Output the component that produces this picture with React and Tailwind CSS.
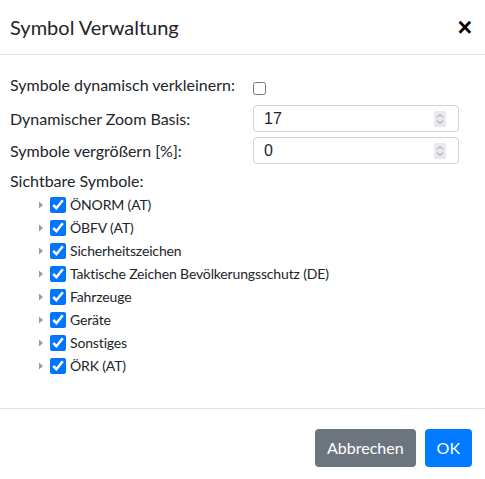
import { useState } from "react";

const groups = [
  "ÖNORM (AT)",
  "ÖBFV (AT)",
  "Sicherheitszeichen",
  "Taktische Zeichen Bevölkerungsschutz (DE)",
  "Fahrzeuge",
  "Geräte",
  "Sonstiges",
  "ÖRK (AT)",
];

function Spinner() {
  return (
    <span className="absolute right-[13px] top-1/2 -translate-y-1/2 w-[12px] h-[16px] bg-[#e9e9ed] flex flex-col items-center justify-center gap-[2px]">
      <svg width="8" height="5" viewBox="0 0 8 5" fill="none" stroke="#8a8a8f" strokeWidth="1">
        <path d="M1 4.5 L4 1.5 L7 4.5" />
      </svg>
      <svg width="8" height="5" viewBox="0 0 8 5" fill="none" stroke="#8a8a8f" strokeWidth="1">
        <path d="M1 0.5 L4 3.5 L7 0.5" />
      </svg>
    </span>
  );
}

function NumberField({ value }) {
  return (
    <div className="relative w-[206px] h-[27px]">
      <input
        type="text"
        readOnly
        value={value}
        className="w-full h-full border border-[#ced4da] rounded-[4px] pl-[10px] text-[16px] text-[#212529] outline-none font-['Liberation_Sans',sans-serif]"
      />
      <Spinner />
    </div>
  );
}

export default function App() {
  const [checked, setChecked] = useState(groups.map(() => true));

  return (
    <div className="w-[485px] h-[479px] bg-white text-[#212529] font-['Lato',sans-serif] flex flex-col">
      <div className="h-[55px] flex items-center justify-between pl-[10px] pr-[13px] border-b border-[#dee2e6]">
        <h5 className="text-[20px] leading-none">Symbol Verwaltung</h5>
        <button className="text-[25px] font-bold leading-none text-black font-['Liberation_Sans',sans-serif]">×</button>
      </div>

      <div className="flex-1 pl-[10px] pt-[18px] text-[16px]">
        <div className="flex h-[24px]">
          <label className="w-[243px] leading-[24px] whitespace-nowrap">Symbole dynamisch verkleinern:</label>
          <div className="pt-[9px]">
            <input type="checkbox" className="block w-[13px] h-[13px] m-0" />
          </div>
        </div>
        <div className="flex items-center mt-[8px]">
          <label className="w-[243px] leading-[24px]">Dynamischer Zoom Basis:</label>
          <NumberField value="17" />
        </div>
        <div className="flex items-center mt-[5px]">
          <label className="w-[243px] leading-[24px]">Symbole vergrößern [%]:</label>
          <NumberField value="0" />
        </div>
        <div className="mt-[5px] leading-[24px]">Sichtbare Symbole:</div>
        <ul className="pl-[28px] text-[14px] tracking-[-0.15px]">
          {groups.map((g, i) => (
            <li key={g} className="h-[23px] flex items-center">
              <svg width="6" height="8" viewBox="0 0 6 8" className="mr-[6px]">
                <path d="M1 0.5 L5 4 L1 7.5 Z" fill="#9a9a9a" />
              </svg>
              <input
                type="checkbox"
                checked={checked[i]}
                onChange={() => setChecked(checked.map((c, j) => (j === i ? !c : c)))}
                className="w-[16px] h-[16px] m-0 mr-[4px]"
              />
              <span>{g}</span>
            </li>
          ))}
        </ul>
      </div>

      <div className="h-[71px] border-t border-[#dee2e6] flex items-center justify-end gap-[9px] pr-[13px] pt-[7px]">
        <button className="h-[38px] px-[12px] rounded-[4px] bg-[#6c757d] text-white text-[16px]">Abbrechen</button>
        <button className="h-[38px] px-[12px] rounded-[4px] bg-[#007bff] text-white text-[16px]">OK</button>
      </div>
    </div>
  );
}
